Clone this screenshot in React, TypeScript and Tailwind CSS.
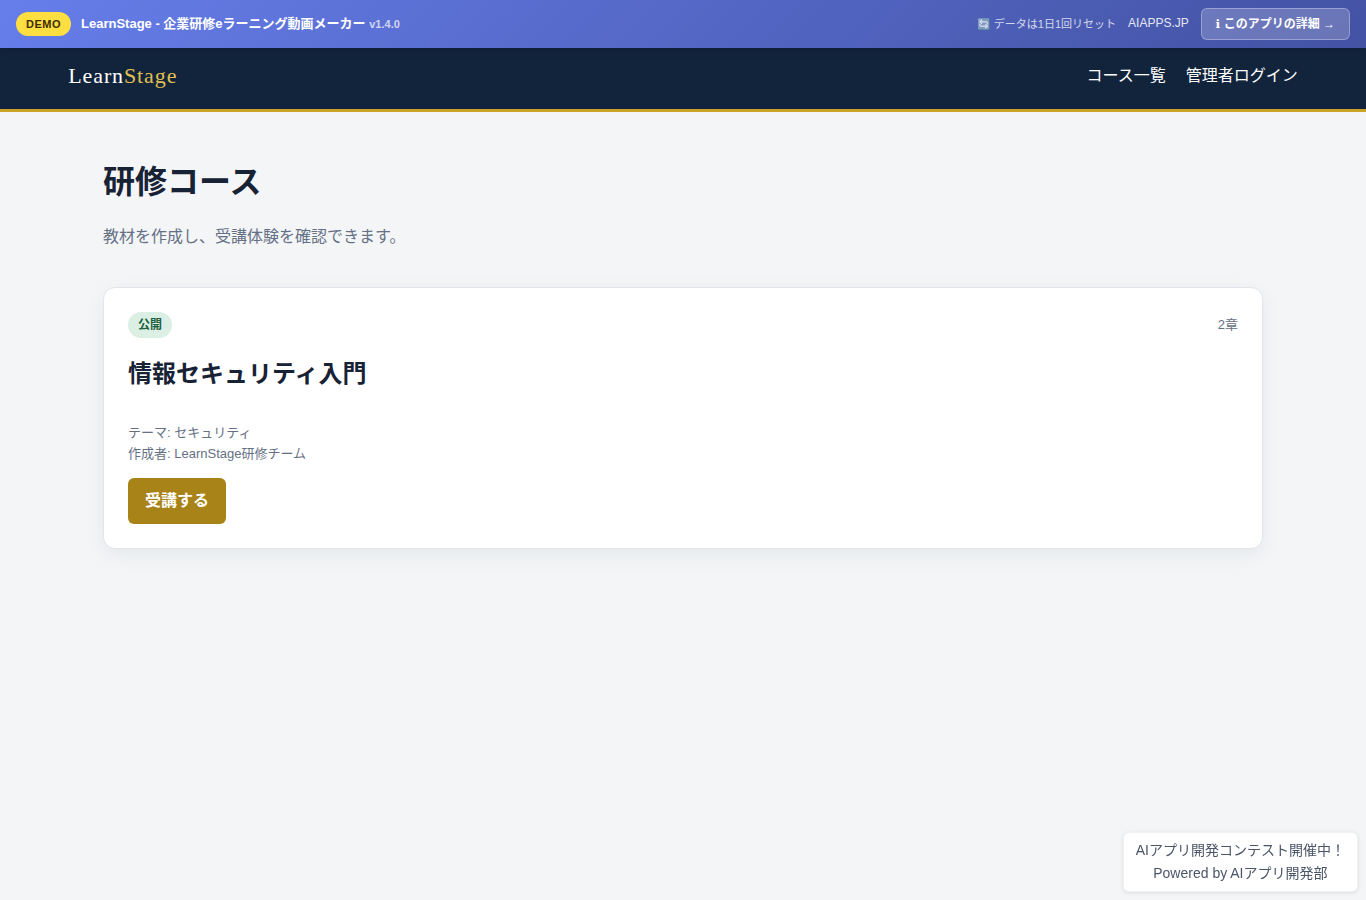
const courses = [
  {
    id: 1,
    title: '情報セキュリティ入門',
    status: '公開',
    chapters: 2,
    theme: 'セキュリティ',
    author: 'LearnStage研修チーム',
  },
]

const DemoBar = () => (
  <div className="relative z-10 flex h-12 items-center justify-between bg-linear-135 from-[#667eea] to-[#4352a3] px-4 text-white shadow-[0_2px_8px_rgba(0,0,0,0.15)]">
    <div className="flex items-center gap-[10px]">
      <span className="rounded-full bg-[#ffde42] px-[10px] py-1 text-[11px] leading-4 font-bold tracking-[0.5px] text-[#3d2c00]">
        DEMO
      </span>
      <span className="text-[13px] leading-5 font-bold">
        LearnStage - 企業研修eラーニング動画メーカー{' '}
        <span className="text-[11px] opacity-70">v1.4.0</span>
      </span>
    </div>
    <div className="flex items-center gap-3">
      <span className="text-[11px] leading-4 opacity-75">🔄 データは1日1回リセット</span>
      <a href="#aiapps" className="pb-[2px] text-xs opacity-85">
        AIAPPS.JP
      </a>
      <a
        href="#detail"
        className="rounded-md border border-white/30 bg-white/20 px-[14px] py-[7px] text-xs font-bold"
      >
        <span className="font-['DejaVu_Sans',sans-serif]">ℹ</span> このアプリの詳細 →
      </a>
    </div>
  </div>
)

const Header = () => (
  <header className="border-b-3 border-[#c9a227] bg-[#11243c] text-white">
    <div className="mx-auto flex w-9/10 items-center justify-between pt-3 pb-[17px]">
      <a
        href="#home"
        className="font-['Liberation_Serif','Noto_Sans_CJK_JP',serif] text-[22px] leading-8 tracking-[0.04em]"
      >
        Learn<span className="text-[#e0c04f]">Stage</span>
      </a>
      <nav className="flex gap-5 text-base leading-8">
        <a href="#courses">コース一覧</a>
        <a href="#login">管理者ログイン</a>
      </nav>
    </div>
  </header>
)

export default function App() {
  return (
    <div
      lang="ja"
      className="flex min-h-screen flex-col bg-[#f3f5f7] font-['Liberation_Sans','Noto_Sans_CJK_JP',sans-serif] text-[#182235]"
    >
      <DemoBar />
      <Header />

      <main className="mx-auto w-9/10 max-w-[1160px] py-12">
        <h1 className="text-[32px] leading-11 font-bold">研修コース</h1>
        <p className="mt-[21px] text-base leading-6 text-[#667085]">
          教材を作成し、受講体験を確認できます。
        </p>

        <div className="mt-[38px] grid gap-6">
          {courses.map((course) => (
            <article
              key={course.id}
              className="rounded-xl border border-[#e2e5ea] bg-white p-6 shadow-[0_6px_20px_rgba(17,36,60,0.06)]"
            >
              <div className="flex items-center justify-between">
                <span className="rounded-full bg-[#dcefe4] px-[10px] py-1 text-xs leading-[18px] font-bold text-[#1d6140]">
                  {course.status}
                </span>
                <span className="text-[13px] leading-5 text-[#667085]">{course.chapters}章</span>
              </div>
              <h2 className="mt-5 text-2xl leading-8 font-bold">{course.title}</h2>
              <div className="mt-8 text-[13px] leading-[21px] text-[#667085]">
                <p>テーマ: {course.theme}</p>
                <p>作成者: {course.author}</p>
              </div>
              <button
                type="button"
                className="mt-[14px] block rounded-md bg-[#a88418] px-[17px] py-[11px] text-base leading-6 font-bold text-white"
              >
                受講する
              </button>
            </article>
          ))}
        </div>
      </main>

      {/* Contest badge */}
      <a
        href="#contest"
        className="fixed right-2 bottom-2 rounded-md border border-black/5 bg-white px-3 py-[6px] text-center text-sm leading-[23px] text-[#4a5568] shadow-[0_1px_4px_rgba(0,0,0,0.1)]"
      >
        AIアプリ開発コンテスト開催中！
        <br />
        Powered by AIアプリ開発部
      </a>
    </div>
  )
}
